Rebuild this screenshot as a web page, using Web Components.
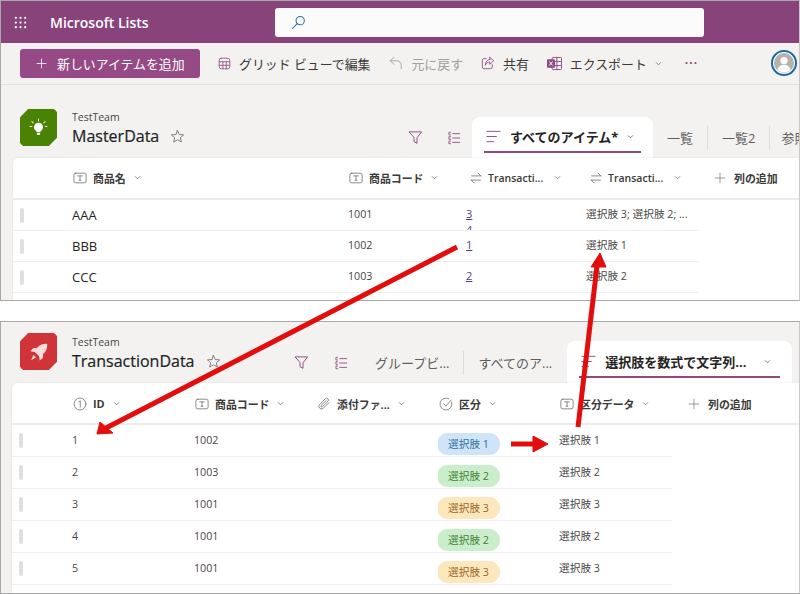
<!DOCTYPE html>
<html lang="ja">
<head>
<meta charset="utf-8">
<title>Microsoft Lists</title>
<style>
  html, body { margin: 0; padding: 0; background: #fff; }
  body {
    width: 800px; height: 594px; overflow: hidden; position: relative;
    font-family: "Open Sans", "Noto Sans CJK JP", sans-serif;
    color: #323130;
  }
</style>
</head>
<body>

<list-panel style="--panel-h:301px">
  <suite-bar></suite-bar>
  <command-bar></command-bar>
  <list-header site="TestTeam" name="MasterData" logo="bulb" tint="#498205" style="--head-h:73px;--logo-top:24px;--title-top:25px;--title-w:322px;--tab-h:41px;--tab-top:5px">
    <view-tab icon-only="filter"></view-tab>
    <view-tab icon-only="rows"></view-tab>
    <view-tab active width="181" label="すべてのアイテム*"></view-tab>
    <view-tab label="一覧" sep></view-tab>
    <view-tab label="一覧2" sep></view-tab>
    <view-tab label="参照" style="margin-left:-3px"></view-tab>
  </list-header>
  <list-card cols="59px 276px 118px 120px 112px 1fr" rows="31" style="--card-left:13px;--head-row:42px;--head-cell:39px;--cell-top:6px">
    <list-row head>
      <col-head></col-head>
      <col-head icon="text" label="商品名"></col-head>
      <col-head icon="text" label="商品コード"></col-head>
      <col-head icon="lookup" label="Transacti..." wide></col-head>
      <col-head icon="lookup" label="Transacti..." wide></col-head>
      <col-head icon="plus" label="列の追加" nochev></col-head>
    </list-row>
    <list-row><row-handle></row-handle><row-cell big>AAA</row-cell><row-cell>1001</row-cell><row-cell link>3<br>4</row-cell><row-cell>選択肢 3; 選択肢 2; ...</row-cell></list-row>
    <list-row><row-handle></row-handle><row-cell big>BBB</row-cell><row-cell>1002</row-cell><row-cell link>1</row-cell><row-cell>選択肢 1</row-cell></list-row>
    <list-row><row-handle></row-handle><row-cell big>CCC</row-cell><row-cell>1003</row-cell><row-cell link>2</row-cell><row-cell>選択肢 2</row-cell></list-row>
  </list-card>
</list-panel>

<div style="height:20px"></div>

<list-panel style="--panel-h:273px">
  <list-header site="TestTeam" name="TransactionData" logo="rocket" tint="#d13438" style="--head-h:61px;--logo-top:11px;--title-top:13px;--title-w:208px;--tab-h:42px;--tab-top:6px">
    <view-tab icon-only="filter"></view-tab>
    <view-tab icon-only="rows" style="margin:0 2px 0 1px"></view-tab>
    <view-tab label="グループビ..." sep></view-tab>
    <view-tab label="すべてのア..."></view-tab>
    <view-tab active width="225" label="選択肢を数式で文字列..." style="margin-left:15px"></view-tab>
  </list-header>
  <list-card cols="60px 122px 122px 122px 121px 113px 1fr" rows="32" style="--card-left:12px;--head-row:42px;--head-cell:41px;--cell-top:7px">
    <list-row head>
      <col-head></col-head>
      <col-head icon="number" label="ID"></col-head>
      <col-head icon="text" label="商品コード"></col-head>
      <col-head icon="clip" label="添付ファ..."></col-head>
      <col-head icon="check" label="区分"></col-head>
      <col-head icon="text" label="区分データ"></col-head>
      <col-head icon="plus" label="列の追加" nochev></col-head>
    </list-row>
    <list-row><row-handle></row-handle><row-cell>1</row-cell><row-cell>1002</row-cell><row-cell></row-cell><row-cell><choice-pill tone="blue">選択肢 1</choice-pill></row-cell><row-cell>選択肢 1</row-cell></list-row>
    <list-row><row-handle></row-handle><row-cell>2</row-cell><row-cell>1003</row-cell><row-cell></row-cell><row-cell><choice-pill tone="green">選択肢 2</choice-pill></row-cell><row-cell>選択肢 2</row-cell></list-row>
    <list-row><row-handle></row-handle><row-cell>3</row-cell><row-cell>1001</row-cell><row-cell></row-cell><row-cell><choice-pill tone="amber">選択肢 3</choice-pill></row-cell><row-cell>選択肢 3</row-cell></list-row>
    <list-row><row-handle></row-handle><row-cell>4</row-cell><row-cell>1001</row-cell><row-cell></row-cell><row-cell><choice-pill tone="green">選択肢 2</choice-pill></row-cell><row-cell>選択肢 2</row-cell></list-row>
    <list-row><row-handle></row-handle><row-cell>5</row-cell><row-cell>1001</row-cell><row-cell></row-cell><row-cell><choice-pill tone="amber">選択肢 3</choice-pill></row-cell><row-cell>選択肢 3</row-cell></list-row>
  </list-card>
</list-panel>

<arrow-layer></arrow-layer>

<script>
// icon strokes, all on a 16x16 box
const ICONS = {
  waffle: '<g fill="currentColor" stroke="none"><circle cx="3" cy="3" r="1.2"/><circle cx="8" cy="3" r="1.2"/><circle cx="13" cy="3" r="1.2"/><circle cx="3" cy="8" r="1.2"/><circle cx="8" cy="8" r="1.2"/><circle cx="13" cy="8" r="1.2"/><circle cx="3" cy="13" r="1.2"/><circle cx="8" cy="13" r="1.2"/><circle cx="13" cy="13" r="1.2"/></g>',
  search: '<circle cx="9.8" cy="6" r="4.4"/><path d="M6.6 9.2 1.6 14.4"/>',
  plus: '<path d="M8 1.500v13M1.500 8h13"/>',
  grid: '<rect x="1.500" y="1.500" width="13" height="13" rx="2.400"/><path d="M1.500 5.800h13M1.500 10.200h13M6 5.800v8.700M10.200 5.800v8.700"/>',
  undo: '<path d="M5.500 1.500 1.500 5.500l4 4M1.500 5.500h7.500a5 5 0 0 1 5 5v4"/>',
  share: '<path d="M6 3H3.500a2 2 0 0 0-2 2v7.500a2 2 0 0 0 2 2H11a2 2 0 0 0 2-2V10"/><path d="M10 1.500l4.500 4-4.500 4V7C7.500 7 6 8 5 10.500 5 7 7 4 10 4z"/>',
  chev: '<path d="M3 6l5 5 5-5"/>',
  filter: '<path d="M1.500 2h13L9.600 8.400v5.800L6.400 12.400V8.400z"/>',
  rows: '<path d="M6.500 3h8M6.500 8h8M6.500 13h8"/><path d="M4 1.500H2.200v3H4M4 6.500H2.200v3H4M4 11.500H2.200v3H4"/>',
  view: '<path d="M1 2.500h14M1 8h10M1 13.500h7"/>',
  text: '<rect x="1" y="2.500" width="14" height="11" rx="2.200"/><path d="M5.300 5.600h5.400M8 5.600v5M7 10.600h2"/>',
  lookup: '<path d="M3 5.600h10.500M10.400 2.500l3.100 3.100M13 10.400H2.500M5.600 13.500l-3.100-3.100"/>',
  number: '<circle cx="8" cy="8" r="6.800"/><path d="M6.600 5.600 8.300 4.400v7.200"/>',
  clip: '<path d="M13.500 6.500 7 13a3 3 0 0 1-4.200-4.200l6.800-6.900a2 2 0 0 1 2.900 2.900L6 11.200a1 1 0 0 1-1.400-1.400L10.400 4"/>',
  check: '<path d="M14.400 5.800A6.800 6.800 0 1 1 11.200 2"/><path d="M5.200 7.600 7.800 10.400 14 3.400"/>',
  star: '<path d="M8 1.600l1.900 4.300 4.600.4-3.500 3 1.100 4.600L8 11.500l-4.100 2.400L5 9.300l-3.500-3 4.600-.4z"/>',
  bulb: '<g fill="#fff" stroke="none"><path d="M8 4a3.700 3.700 0 0 0-2.200 6.700c.5.4.7.9.7 1.300h3c0-.4.2-.9.7-1.300A3.700 3.700 0 0 0 8 4z"/><rect x="6.600" y="12.600" width="2.800" height="1.600" rx=".6"/></g><g stroke="#dfe9c8" stroke-width=".9"><path d="M8 .8v1.700M2.400 3 3.600 4.200M13.600 3l-1.200 1.200M.8 7.200h1.600M13.600 7.200h1.600"/></g>',
  rocket: '<path fill="#fbdcdc" stroke="none" d="M14.600 1.400c-3.600-.2-6.300 1-8 3.200L3.300 5 1.200 7.400l3.400.5 3.500 3.500.5 3.400 2.400-2.100.4-3.300c2.200-1.700 3.400-4.400 3.200-8z"/><path fill="#fbdcdc" stroke="none" d="M3.600 10.400l2 2L1.600 14.600z"/>'
};

function icon(name, size, color, sw) {
  return `<svg width="${size}" height="${size}" viewBox="0 0 16 16" fill="none" stroke="${color || 'currentColor'}" stroke-width="${sw || 1}" stroke-linecap="round" stroke-linejoin="round" style="display:block;flex:none">${ICONS[name]}</svg>`;
}

class ListPanel extends HTMLElement {
  connectedCallback() {
    this.attachShadow({ mode: 'open' }).innerHTML = `
      <style>
        :host {
          display: flex; flex-direction: column; box-sizing: border-box;
          height: var(--panel-h); overflow: hidden;
          background: #f3f2f1; border: 1px solid #a9a9a9; border-right-color: #c8c8c8;
        }
      </style>
      <slot></slot>`;
  }
}

class SuiteBar extends HTMLElement {
  connectedCallback() {
    this.attachShadow({ mode: 'open' }).innerHTML = `
      <style>
        :host {
          display: flex; align-items: center; height: 42px; flex: none;
          background: #88437a; color: #fff; padding-left: 12px; box-sizing: border-box;
        }
        .app { margin-left: 22px; width: 225px; font-size: 14px; font-weight: 600; white-space: nowrap; }
        .search {
          width: 429px; height: 29px; background: #fbfbfb; border-radius: 3px;
          display: flex; align-items: center; padding-left: 16px; box-sizing: border-box;
          color: #2c6ea6;
        }
      </style>
      ${icon('waffle', 15, '#fff')}
      <div class="app">Microsoft Lists</div>
      <div class="search">${icon('search', 15, '#2c6ea6', 1.1)}</div>`;
  }
}

class CommandBar extends HTMLElement {
  connectedCallback() {
    const item = (ic, text, gap) => `
      <div class="item" style="margin-left:${gap}px">${ic}<span>${text}</span></div>`;
    const excel = `<svg width="15" height="15" viewBox="0 0 16 16" style="display:block;flex:none"><rect x="5.500" y="1.500" width="10" height="13" rx="1" fill="none" stroke="#8c4a80"/><path d="M10.500 1.500v13M5.500 5.800h10M5.500 10.200h10" stroke="#8c4a80" fill="none"/><rect x="0" y="3.500" width="8.500" height="9" rx="1" fill="#8c4a80"/><path d="M2.400 5.800 6 10.200M6 5.800l-3.600 4.400" stroke="#fff" fill="none"/></svg>`;
    this.attachShadow({ mode: 'open' }).innerHTML = `
      <style>
        :host {
          display: flex; align-items: center; height: 42px; flex: none; box-sizing: border-box;
          padding: 0 0 1px 19px; border-bottom: 1px solid #e3e1df; background: #f3f2f1;
          font-size: 12.9px; color: #3b3a39; white-space: nowrap;
        }
        .new {
          display: flex; align-items: center; width: 180px; height: 29px; box-sizing: border-box;
          padding-left: 16px; gap: 10px; border-radius: 3px; background: #964a85; color: #fff;
        }
        .item { display: flex; align-items: center; gap: 8px; }
        .off { color: #a19f9d; }
        .chev { margin-left: 8px; }
        .more { margin-left: 23px; color: #8c4a80; font-weight: 700; letter-spacing: 1px; font-size: 12px; line-height: 1; }
        .avatar {
          position: absolute; left: 771px; top: 50px; width: 26px; height: 26px; box-sizing: border-box; border-radius: 50%;
          border: 2px solid #1d6a9f; background: #fff; padding: 1px;
        }
        .avatar svg { display: block; }
      </style>
      <div class="new">${icon('plus', 11, '#fff', 1.2)}<span>新しいアイテムを追加</span></div>
      ${item(icon('grid', 13, '#8c4a80'), 'グリッド ビューで編集', 18)}
      ${item(icon('undo', 14, '#a19f9d'), '<span class="off">元に戻す</span>', 19)}
      ${item(icon('share', 14, '#8c4a80'), '共有', 18)}
      ${item(excel, 'エクスポート', 18)}
      <div class="chev">${icon('chev', 7, '#555', 1.6)}</div>
      <div class="more">···</div>
      <div class="avatar"><svg width="20" height="20" viewBox="0 0 20 20"><circle cx="10" cy="10" r="10" fill="#b3b0ad"/><circle cx="10" cy="7.600" r="3.600" fill="#fff"/><path d="M3.400 17c.8-3.600 3.400-5.200 6.600-5.200s5.800 1.600 6.600 5.200A10 10 0 0 1 3.400 17z" fill="#fff"/></svg></div>`;
  }
}

class ListHeader extends HTMLElement {
  connectedCallback() {
    const logo = this.getAttribute('logo');
    this.attachShadow({ mode: 'open' }).innerHTML = `
      <style>
        :host {
          display: flex; align-items: flex-end; height: var(--head-h); flex: none;
          box-sizing: border-box; padding-left: 19px; background: #f3f2f1; white-space: nowrap;
        }
        .logo {
          align-self: flex-start; margin-top: var(--logo-top); width: 37px; height: 37px; flex: none;
          display: flex; align-items: center; justify-content: center;
          background: ${this.getAttribute('tint')};
          clip-path: polygon(22% 0, 92% 0, 100% 8%, 100% 78%, 78% 100%, 8% 100%, 0 92%, 0 22%);
          border-radius: 3px;
        }
        .title { align-self: flex-start; margin: var(--title-top) 0 0 15px; width: var(--title-w); flex: none; }
        .site { font-size: 10.5px; line-height: 14px; color: #484644; }
        .name { display: flex; align-items: center; font-size: 16px; line-height: 25px; color: #201f1e; -webkit-text-stroke: .2px #201f1e; }
        .name svg { margin-left: 11px; }
        .tabs { display: flex; align-items: flex-end; flex: none; }
      </style>
      <div class="logo">${icon(logo, logo === 'bulb' ? 19 : 20, '#fff')}</div>
      <div class="title">
        <div class="site">${this.getAttribute('site')}</div>
        <div class="name">${this.getAttribute('name')}${icon('star', 15, '#6d6c6a', .9)}</div>
      </div>
      <div class="tabs"><slot></slot></div>`;
  }
}

class ViewTab extends HTMLElement {
  connectedCallback() {
    const only = this.getAttribute('icon-only');
    const active = this.hasAttribute('active');
    const label = this.getAttribute('label') || '';
    let body;
    if (only) {
      body = `<div class="plain" style="width:39px">${icon(only, only === 'filter' ? 15 : 14, '#8c4a80', 1)}</div>`;
    } else if (active) {
      body = `<div class="on" style="width:${this.getAttribute('width')}px"><div class="in">${icon('view', 15, '#8c4a80', 1)}<b>${label}</b><span class="c">${icon('chev', 7, '#555', 1.6)}</span></div></div>`;
    } else {
      body = `<div class="plain"><span>${label}</span>${this.hasAttribute('sep') ? '<i></i>' : ''}</div>`;
    }
    this.attachShadow({ mode: 'open' }).innerHTML = `
      <style>
        :host { display: block; font-size: 13px; color: #605e5c; white-space: nowrap; }
        .plain { display: flex; align-items: center; height: 41px; padding-left: 14px; box-sizing: border-box; }
        .plain i { display: block; width: 1px; height: 24px; background: #dedcda; margin-left: 14px; }
        .on {
          height: var(--tab-h); background: #fff; border-radius: 8px 8px 0 0; box-sizing: border-box;
          padding: var(--tab-top) 12px 0;
        }
        .in {
          height: 31px; display: flex; align-items: center; gap: 9px; box-sizing: border-box; padding-left: 2px;
          border-bottom: 2px solid #8c4a80; color: #252423;
        }
        b { font-weight: 700; }
        .c { margin-left: auto; padding-right: 9px; }
      </style>
      ${body}`;
  }
}

class ListCard extends HTMLElement {
  connectedCallback() {
    this.style.setProperty('--cols', this.getAttribute('cols'));
    this.style.setProperty('--row-h', this.getAttribute('rows') + 'px');
    this.attachShadow({ mode: 'open' }).innerHTML = `
      <style>
        :host {
          display: block; flex: 1; min-height: 0; margin-left: calc(var(--card-left) - 1px);
          background: #fff; border-radius: 5px 0 0 0; box-shadow: 0 0 3px rgba(0,0,0,.08);
        }
      </style>
      <slot></slot>`;
  }
}

class ListRow extends HTMLElement {
  connectedCallback() {
    const head = this.hasAttribute('head');
    this.attachShadow({ mode: 'open' }).innerHTML = `
      <style>
        :host {
          display: grid; grid-template-columns: var(--cols); box-sizing: border-box;
          overflow: hidden;
          height: ${head ? 'var(--head-row)' : 'var(--row-h)'};
          border-bottom: 1px solid #f0efee;
          ${head ? 'border-bottom: 2px solid #edebe9;' : 'width: fit-content;'}
        }
      </style>
      <slot></slot>`;
  }
}

class ColHead extends HTMLElement {
  connectedCallback() {
    const ic = this.getAttribute('icon');
    if (!ic) { this.attachShadow({ mode: 'open' }).innerHTML = '<style>:host{display:block}</style>'; return; }
    const wide = this.hasAttribute('wide');
    const plus = ic === 'plus';
    this.attachShadow({ mode: 'open' }).innerHTML = `
      <style>
        :host {
          display: flex; align-items: center; gap: ${plus ? 8 : wide ? 5 : 6}px;
          padding-left: ${plus ? 16 : wide ? 3 : 1}px; height: var(--head-cell); white-space: nowrap;
          font-size: 10.9px; font-weight: 700; color: #3b3a39;
        }
        .l.wide { font-weight: 600; font-size: 10.5px; width: 62px; }
        .c { margin-left: 2px; }
        .wc { margin-left: -1px; }
      </style>
      ${icon(ic, plus ? 12 : 14, plus ? '#8a8886' : '#6d6c6a', plus ? 1.1 : .9)}
      <span class="l ${wide ? 'wide' : ''}">${this.getAttribute('label')}</span>
      ${this.hasAttribute('nochev') ? '' : `<span class="${wide ? 'wc' : 'c'}">${icon('chev', 7, '#555', 1.6)}</span>`}`;
  }
}

class RowHandle extends HTMLElement {
  connectedCallback() {
    this.attachShadow({ mode: 'open' }).innerHTML = `
      <style>
        :host { display: block; padding: 8px 0 0 7px; }
        div { width: 4px; height: 15px; border-radius: 2px; background: #e1dfdd; }
      </style>
      <div></div>`;
  }
}

class RowCell extends HTMLElement {
  connectedCallback() {
    const big = this.hasAttribute('big');
    const link = this.hasAttribute('link');
    this.attachShadow({ mode: 'open' }).innerHTML = `
      <style>
        :host {
          display: block; min-width: 0; white-space: nowrap; overflow: hidden; padding-top: var(--cell-top);
          font-size: ${big ? '13px' : '10.7px'}; line-height: ${big ? '19px' : '16px'};
          color: ${big ? '#252423' : '#484644'};
          ${link ? 'color:#4f3b8c;text-decoration:underline;font-size:11px;' : ''}
        }
      </style>
      <slot></slot>`;
  }
}

class ChoicePill extends HTMLElement {
  connectedCallback() {
    const tones = {
      blue: ['#cfe4f7', '#2f6fa3'],
      green: ['#caeecb', '#44802f'],
      amber: ['#fde7bd', '#97671c']
    };
    const t = tones[this.getAttribute('tone')];
    this.attachShadow({ mode: 'open' }).innerHTML = `
      <style>
        :host {
          display: block; width: 63px; height: 22px; margin: 1px 0 0 -1px; border-radius: 11px;
          background: ${t[0]}; color: ${t[1]}; font-size: 10.7px; line-height: 22px; text-align: center;
        }
      </style>
      <slot></slot>`;
  }
}

// red annotation arrows drawn over the two screens
class ArrowLayer extends HTMLElement {
  connectedCallback() {
    this.attachShadow({ mode: 'open' }).innerHTML = `
      <style>
        :host { position: absolute; left: 0; top: 0; width: 800px; height: 594px; pointer-events: none; }
        svg { display: block; }
      </style>
      <svg width="800" height="594" viewBox="0 0 800 594">
        <g fill="#e30d0d" stroke="#e30d0d" stroke-linejoin="miter">
          <path d="M457 247 106 428" stroke-width="5" fill="none"/>
          <path d="M97 434 100 422 113 433z" stroke-width="1"/>
          <path d="M578 427 597 266" stroke-width="5" fill="none"/>
          <path d="M600 253 606 267 591 267z" stroke-width="1"/>
          <path d="M511 444H534" stroke-width="5" fill="none"/>
          <path d="M548 444 533 436V452z" stroke-width="1"/>
        </g>
      </svg>`;
  }
}

customElements.define('list-panel', ListPanel);
customElements.define('suite-bar', SuiteBar);
customElements.define('command-bar', CommandBar);
customElements.define('list-header', ListHeader);
customElements.define('view-tab', ViewTab);
customElements.define('list-card', ListCard);
customElements.define('list-row', ListRow);
customElements.define('col-head', ColHead);
customElements.define('row-handle', RowHandle);
customElements.define('row-cell', RowCell);
customElements.define('choice-pill', ChoicePill);
customElements.define('arrow-layer', ArrowLayer);
</script>
</body>
</html>
